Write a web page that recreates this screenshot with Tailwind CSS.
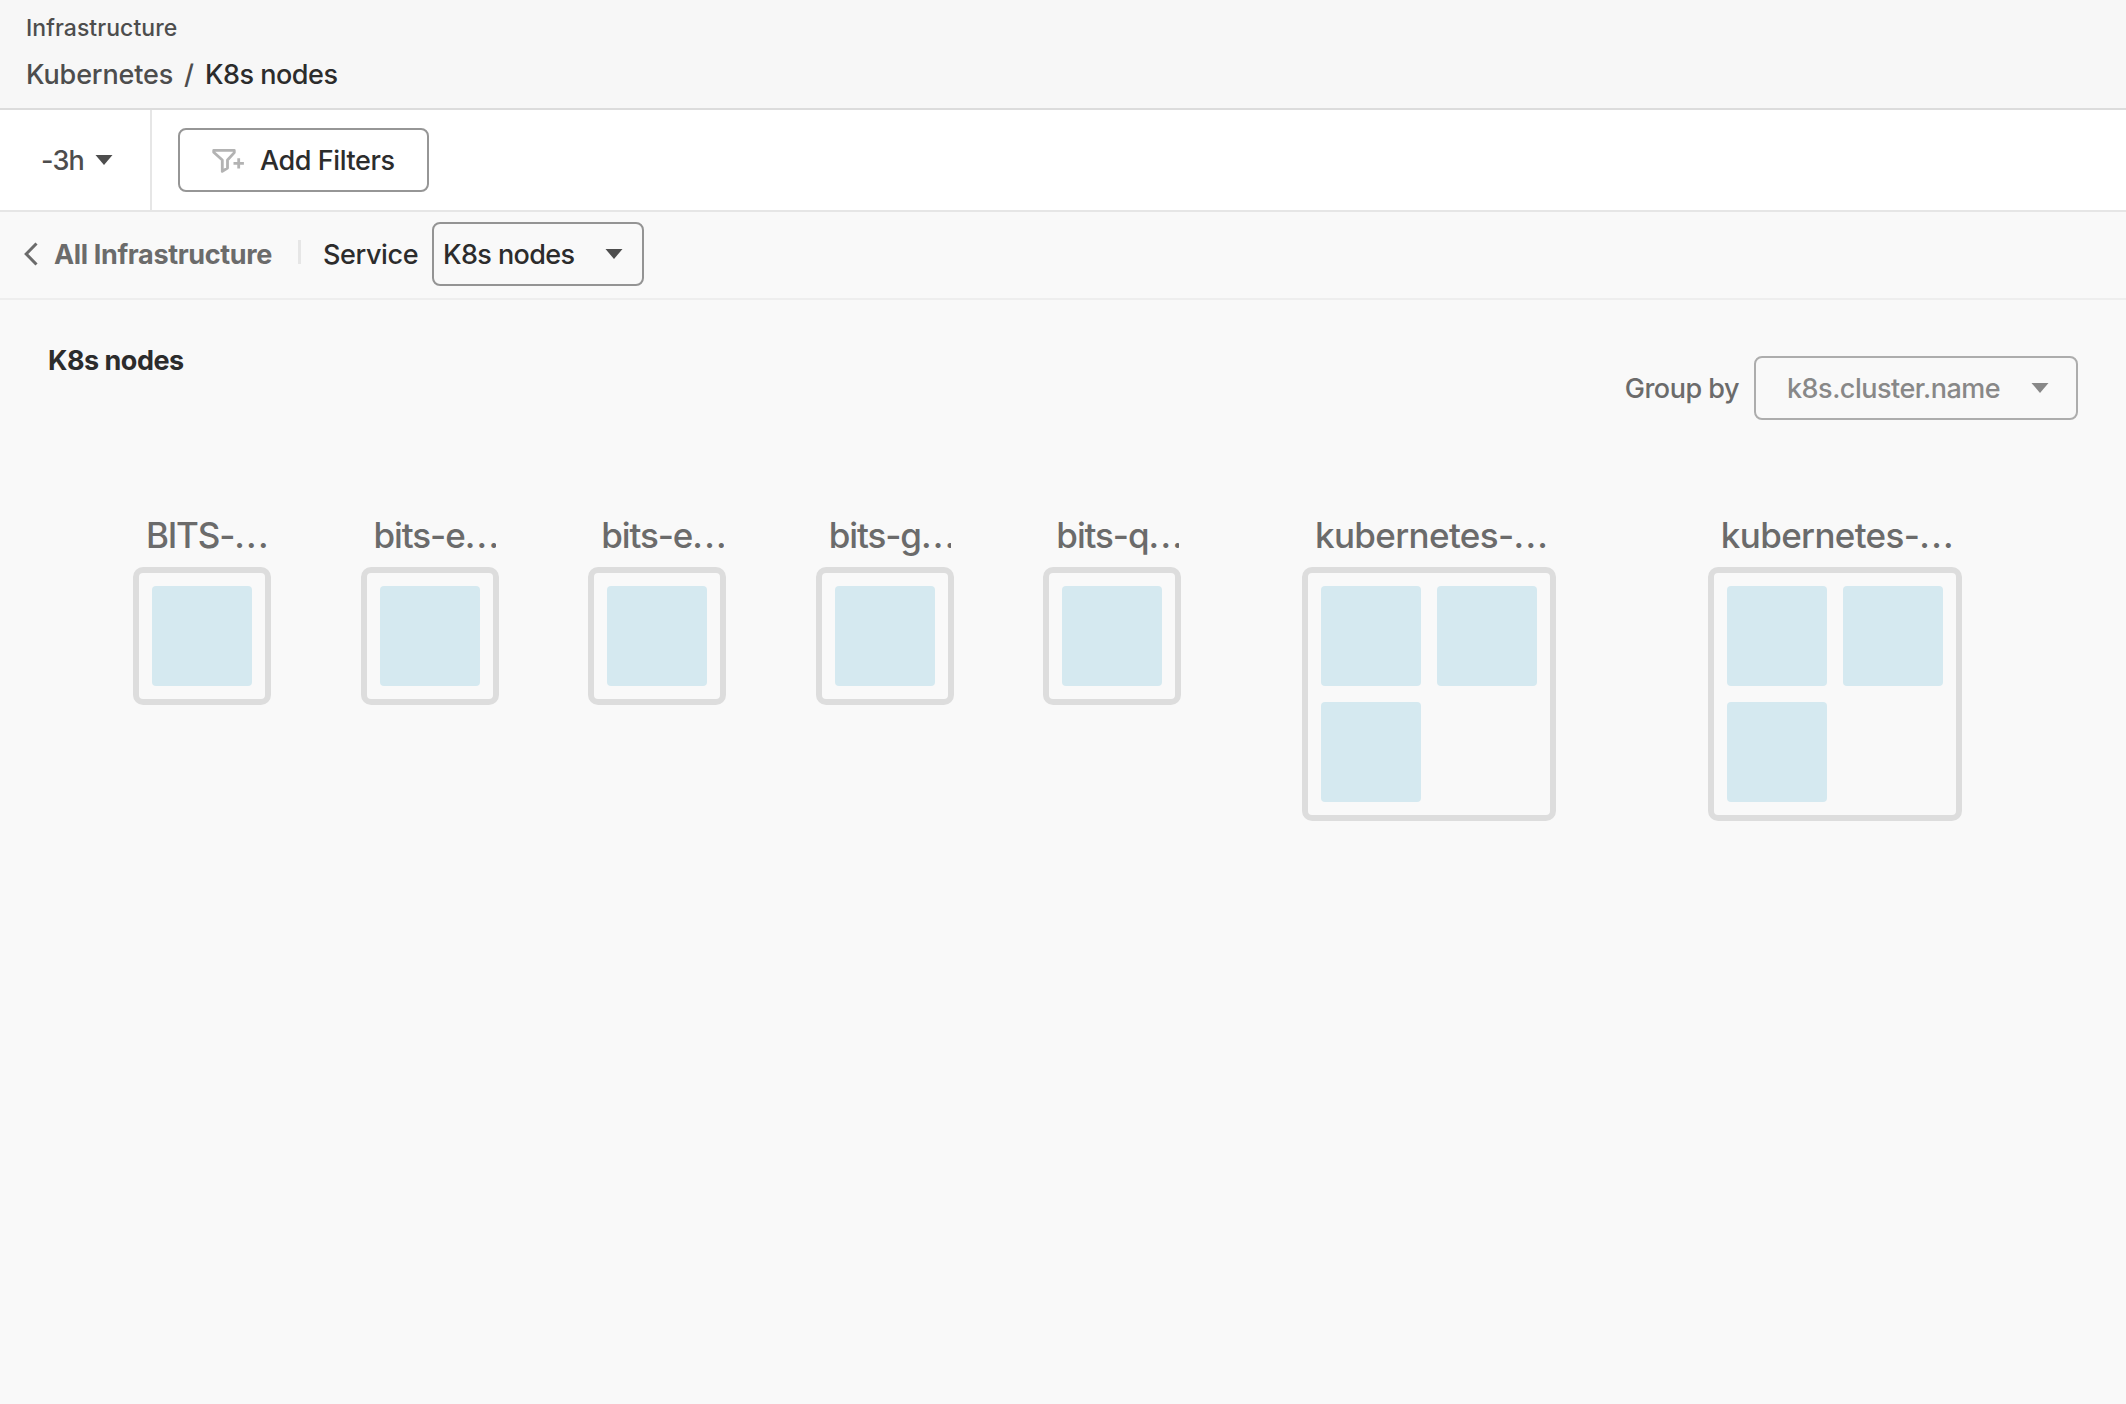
<!DOCTYPE html>
<html lang="en">
<head>
<meta charset="utf-8">
<title>K8s nodes</title>
<script src="https://cdn.jsdelivr.net/npm/@tailwindcss/browser@4"></script>
</head>
<body class="h-[1404px] overflow-hidden bg-[#f9f9f9] font-[Inter,sans-serif] text-[27px] leading-8 font-[450] text-[#2c2c2c] whitespace-nowrap">
<div class="flex h-full flex-col">
  <header class="h-[110px] shrink-0 border-b-2 border-[#dcdcdc] bg-[#f7f7f7] pl-[26px] pt-3 text-[#4d4d4d]">
    <div class="text-[23px] tracking-[0.05px]">Infrastructure</div>
    <nav class="mt-[15px] flex">
      <a class="w-[158px] tracking-[-0.15px]">Kubernetes</a>
      <span class="w-[21px]">/</span>
      <span class="tracking-[-0.5px] text-[#2c2c2c]">K8s nodes</span>
    </nav>
  </header>

  <div class="flex h-[102px] shrink-0 border-b-2 border-[#e6e6e6] bg-white">
    <button class="flex w-[152px] items-center border-r-2 border-[#e6e6e6] pl-[41px] text-[#4d4d4d]">
      <span class="w-[54px] pt-0.5 text-left tracking-[-0.8px]">-3h</span>
      <svg class="h-2.5 w-[18px]" viewBox="0 0 18 10" fill="currentColor"><path d="M.5 0h17L9 10z"/></svg>
    </button>
    <button class="ml-[26px] mt-[18px] flex h-16 w-[251px] items-center rounded-lg border-2 border-[#969696] pl-8">
      <svg class="h-7 w-[34px]" viewBox="0 0 34 28" fill="none" stroke="#b3b3b3" stroke-width="2.8" stroke-linejoin="round"><path d="M1.700 4.400h20.600v2.200l-6.800 7.400v8l-5.200 3.400V14L1.700 6.200z"/><path d="M21.500 17.400h10.400M26.700 12.200v10.400"/></svg>
      <span class="ml-3.5 pt-0.5 tracking-[-0.42px]">Add Filters</span>
    </button>
  </div>

  <div class="flex h-[88px] shrink-0 items-center border-b-2 border-[#eeeeee] pb-0.5 pl-6">
    <svg class="h-6 w-[15px]" viewBox="0 0 15 24" fill="none" stroke="#6b6b6b" stroke-width="3"><path d="M12.500 1.500 2.200 12l10.300 10.500"/></svg>
    <a class="ml-[15px] w-[244px] pt-0.5 font-bold tracking-[-0.36px] text-[#6b6b6b]">All Infrastructure</a>
    <i class="mb-1 h-6 w-[3px] bg-[#e6e6e6]"></i>
    <span class="ml-[22px] w-[109px] pt-0.5 tracking-[-0.4px]">Service</span>
    <button class="flex h-16 w-[212px] items-center rounded-lg border-2 border-[#949494] pl-[9px]">
      <span class="w-[162px] pt-0.5 text-left tracking-[-0.6px]">K8s nodes</span>
      <svg class="h-2.5 w-[18px] text-[#4d4d4d]" viewBox="0 0 18 10" fill="currentColor"><path d="M.5 0h17L9 10z"/></svg>
    </button>
  </div>

  <main>
    <div class="flex h-[187px] items-start justify-between pl-12 pr-12">
      <h1 class="mt-[45px] font-bold tracking-[-0.5px]">K8s nodes</h1>
      <div class="mt-14 flex items-center">
        <span class="mr-[15px] pt-0.5 tracking-[-0.5px] text-[#6b6b6b]">Group by</span>
        <button class="flex h-16 w-[324px] items-center rounded-lg border-2 border-[#adadad] pl-[31px] text-[#888888]">
          <span class="w-[244px] pt-0.5 text-left tracking-[-0.5px]">k8s.cluster.name</span>
          <svg class="h-2.5 w-[18px]" viewBox="0 0 18 10" fill="currentColor"><path d="M.5 0h17L9 10z"/></svg>
        </button>
      </div>
    </div>
    <div id="clusters" class="flex pl-[88.2px] pt-[25px]"></div>
  </main>
</div>
<script>
const clusters = [['BITS-', 1], ['bits-e', 1], ['bits-e', 1], ['bits-g', 1], ['bits-q', 1], ['kubernetes-', 3], ['kubernetes-', 3]];
const tile = '<div class="size-[100px] rounded-[4px] bg-[#d5e9f0]"></div>';
document.getElementById('clusters').innerHTML = clusters.map(([name, nodes]) => {
  const big = nodes > 1;
  return `<section class="flex shrink-0 justify-center ${big ? 'w-[405.800px]' : 'w-[227.600px]'}">
    <div class="${big ? 'w-[254px]' : 'w-[138px]'}">
      <div class="mr-[2.500px] ml-[13px] h-[55px] overflow-hidden text-[35px] leading-[46px] text-[#6b6b6b] ${name === 'BITS-' ? 'tracking-[-1.200px]' : big ? 'tracking-[-0.650px]' : 'tracking-[-1.100px]'}">${name}<span class="tracking-[1.300px]">...</span></div>
      <div class="grid ${big ? 'h-[254px] grid-cols-2' : 'h-[138px]'} content-start gap-4 rounded-[10px] border-6 border-[#dddddd] p-[13px]">${tile.repeat(nodes)}</div>
    </div>
  </section>`;
}).join('');
</script>
</body>
</html>
